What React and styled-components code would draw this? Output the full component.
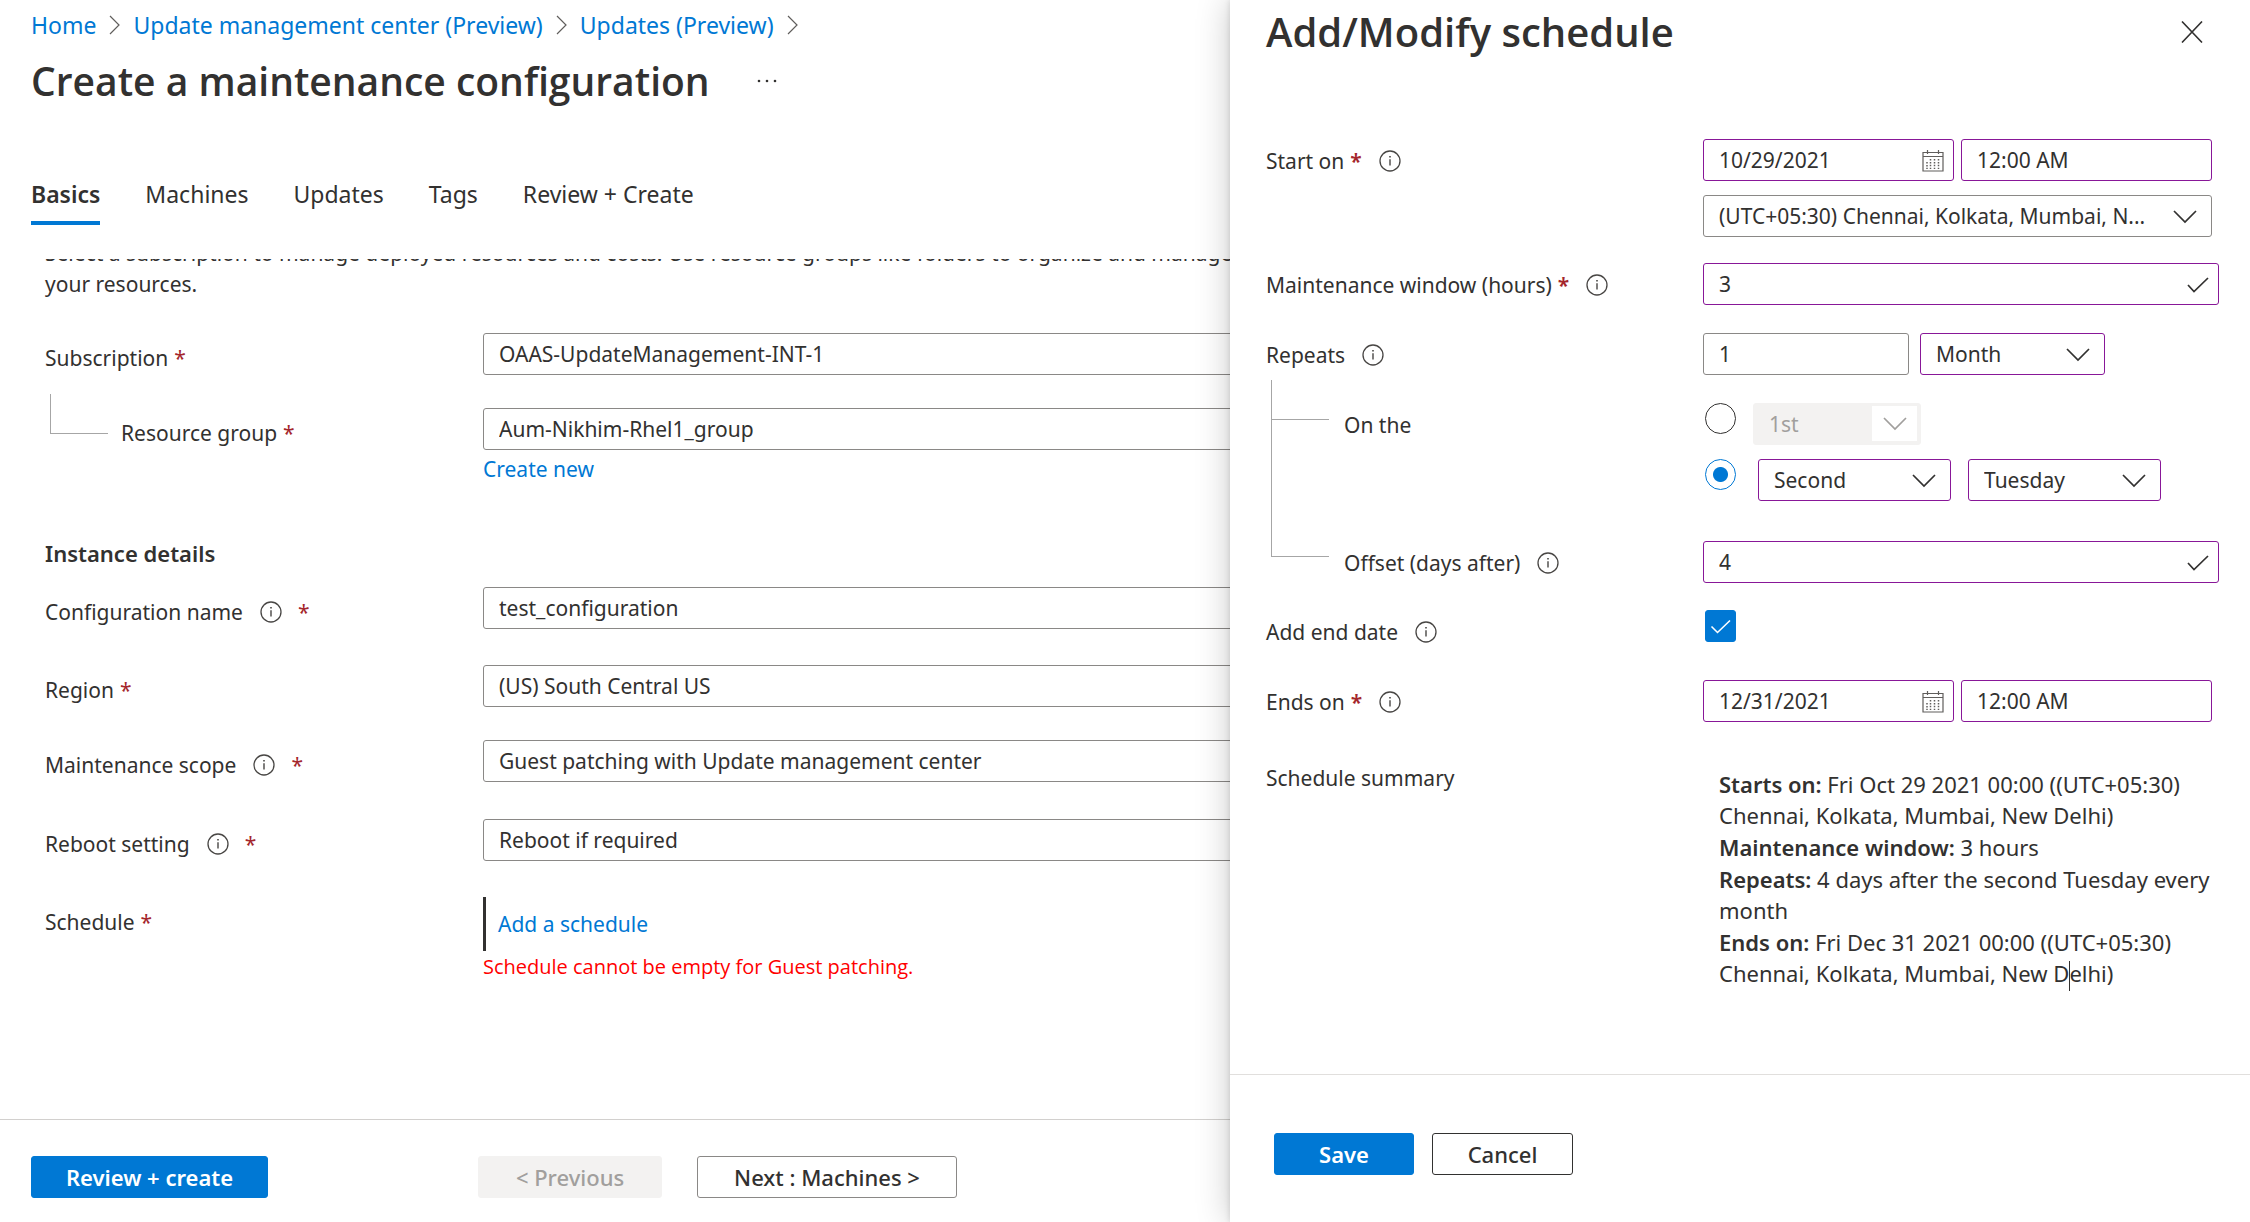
import React from "react";
import styled, { createGlobalStyle, css } from "styled-components";

const blue = "#0078d4";
const ink = "#323130";
const grey = "#8a8886";
const purple = "#881798";
const red = "#a4262c";

const GlobalStyle = createGlobalStyle`
  *, *::before, *::after { box-sizing: border-box; }
  body {
    margin: 0;
    background: #fff;
    color: ${ink};
    font: 21px/32px "Noto Sans", "Open Sans", sans-serif;
  }
  h1, h2, p, ul, ol { margin: 0; padding: 0; }
  button, input, select { font: inherit; color: inherit; }
`;

const Shell = styled.div`
  height: 100vh;
  display: flex;
  overflow: hidden;
`;

/* Main blade */

const Blade = styled.main`
  flex: 1;
  min-width: 0;
  display: flex;
  flex-direction: column;
  overflow: hidden;
`;

const Crumbs = styled.ol`
  display: flex;
  align-items: center;
  gap: 13px;
  height: 32px;
  margin: 9px 0 0 31px;
  font-size: 23px;
  list-style: none;
`;

const Crumb = styled.li`
  display: flex;
  align-items: center;
  gap: 13px;
  white-space: nowrap;
`;

const Link = styled.a`
  color: ${blue};
  text-decoration: none;
`;

const TitleRow = styled.div`
  display: flex;
  align-items: center;
  gap: 46px;
  height: 56px;
  margin: 12px 0 0 31px;
`;

const Title = styled.h1`
  font-family: "Open Sans", "Noto Sans", sans-serif;
  font-size: ${(p) => (p.$pane ? 40 : 39)}px;
  line-height: 56px;
  font-weight: 600;
  white-space: nowrap;
`;

const IconButton = styled.button`
  display: flex;
  padding: 0;
  border: 0;
  background: none;
  cursor: pointer;
`;

const Tabs = styled.div`
  display: flex;
  gap: 45px;
  margin: 69px 0 0 31px;
`;

const Tab = styled.button`
  padding: 0 0 11px;
  border: 0;
  border-bottom: 4px solid ${(p) => (p.$active ? blue : "transparent")};
  background: none;
  font-weight: ${(p) => (p.$active ? 600 : 400)};
  font-size: 23px;
  line-height: 32px;
  white-space: nowrap;
  cursor: pointer;
`;

const Scroll = styled.div`
  flex: 1;
  min-height: 0;
  margin-top: 34px;
  padding-left: 45px;
  overflow: hidden;
`;

const Form = styled.div`
  width: 1195px;
`;

const Intro = styled.p`
  width: 1240px;
  margin-top: -21px;
  line-height: 31px;
`;

const Row = styled.div`
  display: grid;
  grid-template-columns: 438px minmax(0, 1fr);
  margin-top: ${(p) => p.$gap}px;
`;

const Label = styled.label`
  display: flex;
  align-items: center;
  height: 32px;
  margin-top: ${(p) => (p.$pane ? 6 : p.$flush ? 0 : 9)}px;
  padding-left: ${(p) => p.$indent || 0}px;
  white-space: nowrap;
`;

const Star = styled.span`
  margin-left: ${(p) => (p.$far ? 16 : 6)}px;
  color: ${red};
  font-weight: ${(p) => (p.$bold ? 600 : 400)};
`;

const InfoIcon = styled.svg`
  flex: none;
  width: 22px;
  height: 22px;
  margin-left: 17px;
`;

const Stack = styled.div`
  display: flex;
  flex-direction: column;
  gap: ${(p) => p.$gap || 0}px;
`;

const Branch = styled.span`
  position: absolute;
  left: 5px;
  top: ${(p) => p.$top}px;
  width: 58px;
  height: ${(p) => p.$height}px;
  border-left: 1px solid #a6a6a6;
  border-bottom: 1px solid #a6a6a6;
`;

const TreeCell = styled.div`
  position: relative;
`;

const frame = css`
  width: 100%;
  height: 42px;
  padding: 0 15px;
  border: 1px solid ${(p) => (p.$edited ? purple : grey)};
  border-radius: 3px;
  background: #fff;
  outline: none;
`;

const Input = styled.input`
  ${frame}
`;

const NativeSelect = styled.select`
  ${frame}
  appearance: none;
  opacity: 1;
  &:disabled {
    background: #f3f2f1;
    border-color: #f3f2f1;
    color: #a19f9d;
  }
`;

const Control = styled.div`
  position: relative;
  width: ${(p) => (p.$width ? `${p.$width}px` : "100%")};
  flex: none;
`;

const Adornment = styled.span`
  position: absolute;
  top: 0;
  right: ${(p) => p.$right}px;
  height: 44px;
  display: flex;
  align-items: center;
  pointer-events: none;
`;

const DisabledArrow = styled(Adornment)`
  top: 3px;
  right: 4px;
  width: 45px;
  height: 35px;
  justify-content: center;
  background: #fff;
`;

const SectionTitle = styled.h2`
  margin-top: ${(p) => p.$gap}px;
  font-size: 22px;
  line-height: 32px;
  font-weight: 600;
`;

const LinkBox = styled.div`
  display: flex;
  align-items: center;
  height: 54px;
  padding-left: 12px;
  border-left: 3px solid ${ink};
`;

const ErrorText = styled.p`
  color: #f00;
  font-family: "Open Sans", "Noto Sans", sans-serif;
  font-size: 20px;
`;

const Footer = styled.footer`
  display: flex;
  align-items: flex-start;
  height: ${(p) => p.$height}px;
  flex: none;
  padding: ${(p) => p.$pad};
  border-top: 1px solid ${(p) => p.$line};
`;

const Button = styled.button`
  width: ${(p) => p.$width}px;
  height: 42px;
  margin-left: ${(p) => p.$gap || 0}px;
  padding: 0;
  border: 1px solid ${(p) => (p.$dark ? ink : grey)};
  border-radius: 3px;
  background: #fff;
  font-size: 22px;
  font-weight: 500;
  white-space: nowrap;
  cursor: pointer;
  ${(p) =>
    p.$primary &&
    css`
      border-color: ${blue};
      background: ${blue};
      color: #fff;
      font-weight: 600;
    `}
  &:disabled {
    border-color: #f3f2f1;
    background: #f3f2f1;
    color: #a19f9d;
  }
`;

/* Context pane, casts its shadow over the blade */

const Pane = styled.aside`
  position: relative;
  z-index: 1;
  flex: none;
  width: 1020px;
  max-width: 100%;
  display: flex;
  flex-direction: column;
  background: #fff;
  box-shadow: 0 0 32px rgba(0, 0, 0, 0.22), 0 0 6px rgba(0, 0, 0, 0.14);
`;

const PaneHeader = styled.header`
  display: flex;
  justify-content: space-between;
  align-items: center;
  height: 60px;
  margin-top: 2px;
  padding: 0 47px 0 36px;
`;

const PaneBody = styled.div`
  flex: 1;
  min-height: 0;
  padding: 77px 31px 0 36px;
`;

const PaneRow = styled(Row)`
  grid-template-columns: 437px minmax(0, 1fr);
`;

const Line = styled.div`
  display: flex;
  align-items: flex-start;
  gap: ${(p) => p.$gap}px;
`;

const Wide = styled.div`
  display: grid;
  grid-template-columns: 1fr 1fr;
  gap: 14px 7px;
  margin-right: 7px;
`;

const FullSpan = styled.div`
  grid-column: 1 / -1;
`;

const Radio = styled.input`
  appearance: none;
  flex: none;
  width: 31px;
  height: 31px;
  margin: 0 0 0 2px;
  border: 1px solid ${ink};
  border-radius: 50%;
  background: #fff;
  &:checked {
    border-color: ${blue};
    background: radial-gradient(circle, ${blue} 7px, #fff 8px);
  }
`;

const CheckWrap = styled.div`
  position: relative;
  width: 31px;
  height: 32px;
  margin-left: 2px;
  svg {
    position: absolute;
    inset: 0;
    pointer-events: none;
  }
`;

const CheckBox = styled.input`
  appearance: none;
  display: block;
  width: 31px;
  height: 32px;
  margin: 0;
  border: 1px solid ${ink};
  border-radius: 3px;
  &:checked {
    border-color: ${blue};
    background: ${blue};
  }
`;

const Summary = styled.div`
  padding: 6px 0 0 16px;
  font-size: 22px;
  line-height: 31px;
  strong {
    font-weight: 600;
    line-height: 32px;
  }
`;

const Caret = styled.span`
  display: inline-block;
  width: 1px;
  height: 30px;
  margin-right: -1px;
  background: ${ink};
  vertical-align: middle;
`;

const Info = () => (
  <InfoIcon viewBox="0 0 22 22" fill="none" stroke="#484644" aria-hidden="true">
    <circle cx="11" cy="11" r="10" strokeWidth="1.3" />
    <path d="M11 9.2v6.3" strokeWidth="1.4" />
    <path d="M11 6v1.6" strokeWidth="1.6" />
  </InfoIcon>
);

const Chevron = ({ color = ink }) => (
  <svg width="24" height="14" viewBox="0 0 24 14" fill="none" stroke={color} strokeWidth="1.7" aria-hidden="true">
    <path d="M1 1l11 11L23 1" />
  </svg>
);

const CrumbArrow = () => (
  <svg width="11" height="20" viewBox="0 0 11 20" fill="none" stroke="#605e5c" strokeWidth="1.2" aria-hidden="true">
    <path d="M1 1l9 9-9 9" />
  </svg>
);

const Tick = () => (
  <svg width="22" height="16" viewBox="0 0 22 16" fill="none" stroke={ink} strokeWidth="1.7" aria-hidden="true">
    <path d="M1 8l6 6.500L21 1" />
  </svg>
);

const Calendar = () => (
  <svg width="22" height="22" viewBox="0 0 22 22" fill="none" stroke="#605e5c" aria-hidden="true">
    <path d="M1 2.500h20v18.500H1zM1 6.500h20" strokeWidth="1.2" />
    <path d="M5.500 0v4M16.500 0v4" strokeWidth="1.2" />
    <path d="M8.500 9v10M12.500 9v10M16.500 9v10" strokeWidth="1.5" strokeDasharray="1.500 1.400" />
    <path d="M5 12v7" strokeWidth="1.5" strokeDasharray="1.500 1.400" />
  </svg>
);

function Select({ id, value, edited, disabled, width, label, arrow = 15 }) {
  return (
    <Control $width={width}>
      <NativeSelect id={id} aria-label={label} disabled={disabled} $edited={edited}>
        <option>{value}</option>
      </NativeSelect>
      {disabled ? (
        <DisabledArrow>
          <Chevron color="#a19f9d" />
        </DisabledArrow>
      ) : (
        <Adornment $right={arrow}>
          <Chevron />
        </Adornment>
      )}
    </Control>
  );
}

/* Drop-down whose arrow end runs under the context pane */
function WideSelect({ id, value }) {
  return (
    <NativeSelect id={id}>
      <option>{value}</option>
    </NativeSelect>
  );
}

function DateTime({ id, date, children }) {
  return (
    <Wide>
      <Control>
        <Input id={id} type="text" defaultValue={date} $edited />
        <Adornment $right={10}>
          <Calendar />
        </Adornment>
      </Control>
      <Input type="text" aria-label="Time" defaultValue="12:00 AM" $edited />
      {children}
    </Wide>
  );
}

function Checked({ id, value }) {
  return (
    <Control>
      <Input id={id} type="text" defaultValue={value} $edited />
      <Adornment $right={10}>
        <Tick />
      </Adornment>
    </Control>
  );
}

function SchedulePane() {
  return (
    <Pane>
      <PaneHeader>
        <Title as="h2" $pane>
          Add/Modify schedule
        </Title>
        <IconButton aria-label="Close">
          <svg width="22" height="22" viewBox="0 0 22 22" stroke={ink} strokeWidth="1.6">
            <path d="M1 0.500l20 21M21 0.500l-20 21" />
          </svg>
        </IconButton>
      </PaneHeader>
      <PaneBody>
        <PaneRow $gap={0}>
          <Label $pane htmlFor="start">
            Start on <Star $bold>*</Star>
            <Info />
          </Label>
          <DateTime id="start" date="10/29/2021">
            <FullSpan>
              <Select label="Time zone" value="(UTC+05:30) Chennai, Kolkata, Mumbai, N..." />
            </FullSpan>
          </DateTime>
        </PaneRow>
        <PaneRow $gap={26}>
          <Label $pane htmlFor="window">
            Maintenance window (hours) <Star $bold>*</Star>
            <Info />
          </Label>
          <Checked id="window" value="3" />
        </PaneRow>
        <PaneRow $gap={28}>
          <Label $pane htmlFor="repeats">
            Repeats
            <Info />
          </Label>
          <Line $gap={11}>
            <Control $width={206}>
              <Input id="repeats" type="text" defaultValue="1" />
            </Control>
            <Select label="Repeat unit" value="Month" width={185} edited />
          </Line>
        </PaneRow>
        <PaneRow $gap={28}>
          <TreeCell>
            <Branch $top={-23} $height={40} />
            <Branch $top={16} $height={138} />
            <Label as="div" $pane $indent={78}>
              On the
            </Label>
          </TreeCell>
          <Stack $gap={14}>
            <Line $gap={17}>
              <Radio type="radio" name="on" aria-label="Day of month" />
              <Select label="Day of month" value="1st" width={168} disabled />
            </Line>
            <Line $gap={22}>
              <Radio type="radio" name="on" aria-label="Day of week" defaultChecked />
              <Line $gap={17}>
                <Select label="Week" value="Second" width={193} edited />
                <Select label="Weekday" value="Tuesday" width={193} edited />
              </Line>
            </Line>
          </Stack>
        </PaneRow>
        <PaneRow $gap={40}>
          <Label $pane $indent={78} htmlFor="offset">
            Offset (days after)
            <Info />
          </Label>
          <Checked id="offset" value="4" />
        </PaneRow>
        <PaneRow $gap={27}>
          <Label $pane htmlFor="end">
            Add end date
            <Info />
          </Label>
          <CheckWrap>
            <CheckBox id="end" type="checkbox" defaultChecked />
            <svg width="31" height="32" viewBox="0 0 31 32" fill="none" stroke="#fff" strokeWidth="1.6" aria-hidden="true">
              <path d="M6.500 16.500l6 6L25 10.500" />
            </svg>
          </CheckWrap>
        </PaneRow>
        <PaneRow $gap={32}>
          <Label $pane htmlFor="ends">
            Ends on <Star $bold>*</Star>
            <Info />
          </Label>
          <DateTime id="ends" date="12/31/2021" />
        </PaneRow>
        <PaneRow $gap={40}>
          <Label as="div" $flush>
            Schedule summary
          </Label>
          <Summary>
            <p>
              <strong>Starts on:</strong> Fri Oct 29 2021 00:00 ((UTC+05:30) Chennai, Kolkata, Mumbai, New Delhi)
            </p>
            <p>
              <strong>Maintenance window:</strong> 3 hours
            </p>
            <p>
              <strong>Repeats:</strong> 4 days after the second Tuesday every month
            </p>
            <p>
              <strong>Ends on:</strong> Fri Dec 31 2021 00:00 ((UTC+05:30) Chennai, Kolkata, Mumbai, New D
              <Caret />
              elhi)
            </p>
          </Summary>
        </PaneRow>
      </PaneBody>
      <Footer $height={148} $pad="58px 44px 0" $line="#e1dfdd">
        <Button $primary $width={140}>
          Save
        </Button>
        <Button $dark $width={141} $gap={18}>
          Cancel
        </Button>
      </Footer>
    </Pane>
  );
}

export default function App() {
  return (
    <Shell>
      <GlobalStyle />
      <Blade>
        <Crumbs>
          {["Home", "Update management center (Preview)", "Updates (Preview)"].map((c) => (
            <Crumb key={c}>
              <Link href="#">{c}</Link>
              <CrumbArrow />
            </Crumb>
          ))}
        </Crumbs>
        <TitleRow>
          <Title>Create a maintenance configuration</Title>
          <IconButton aria-label="More">
            <svg width="22" height="6" viewBox="0 0 22 6" fill={ink}>
              <circle cx="3" cy="3" r="1.300" />
              <circle cx="11" cy="3" r="1.300" />
              <circle cx="19" cy="3" r="1.300" />
            </svg>
          </IconButton>
        </TitleRow>
        <Tabs role="tablist">
          {["Basics", "Machines", "Updates", "Tags", "Review + Create"].map((t, i) => (
            <Tab key={t} role="tab" aria-selected={i === 0} $active={i === 0}>
              {t}
            </Tab>
          ))}
        </Tabs>
        <Scroll>
          <Form>
            <Intro>
              Select a subscription to manage deployed resources and costs. Use resource groups like folders to organize
              and manage all your resources.
            </Intro>
            <Row $gap={33}>
              <Label htmlFor="sub">
                Subscription <Star>*</Star>
              </Label>
              <WideSelect id="sub" value="OAAS-UpdateManagement-INT-1" />
            </Row>
            <Row $gap={33}>
              <TreeCell>
                <Branch $top={-14} $height={40} />
                <Label htmlFor="rg" $indent={76}>
                  Resource group <Star>*</Star>
                </Label>
              </TreeCell>
              <Stack $gap={3}>
                <WideSelect id="rg" value="Aum-Nikhim-Rhel1_group" />
                <Link href="#">Create new</Link>
              </Stack>
            </Row>
            <SectionTitle $gap={52}>Instance details</SectionTitle>
            <Row $gap={18}>
              <Label htmlFor="name">
                Configuration name
                <Info />
                <Star $far>*</Star>
              </Label>
              <Input id="name" type="text" defaultValue="test_configuration" />
            </Row>
            <Row $gap={36}>
              <Label htmlFor="region">
                Region <Star>*</Star>
              </Label>
              <WideSelect id="region" value="(US) South Central US" />
            </Row>
            <Row $gap={33}>
              <Label htmlFor="scope">
                Maintenance scope
                <Info />
                <Star $far>*</Star>
              </Label>
              <WideSelect id="scope" value="Guest patching with Update management center" />
            </Row>
            <Row $gap={37}>
              <Label htmlFor="reboot">
                Reboot setting
                <Info />
                <Star $far>*</Star>
              </Label>
              <WideSelect id="reboot" value="Reboot if required" />
            </Row>
            <Row $gap={36}>
              <Label as="div">
                Schedule <Star>*</Star>
              </Label>
              <Stack>
                <LinkBox>
                  <Link href="#">Add a schedule</Link>
                </LinkBox>
                <ErrorText>Schedule cannot be empty for Guest patching.</ErrorText>
              </Stack>
            </Row>
          </Form>
        </Scroll>
        <Footer $height={103} $pad="36px 31px 0" $line="#d2d0ce">
          <Button $primary $width={237}>
            Review + create
          </Button>
          <Button disabled $width={184} $gap={210}>
            &lt; Previous
          </Button>
          <Button $width={260} $gap={35}>
            Next : Machines &gt;
          </Button>
        </Footer>
      </Blade>
      <SchedulePane />
    </Shell>
  );
}
